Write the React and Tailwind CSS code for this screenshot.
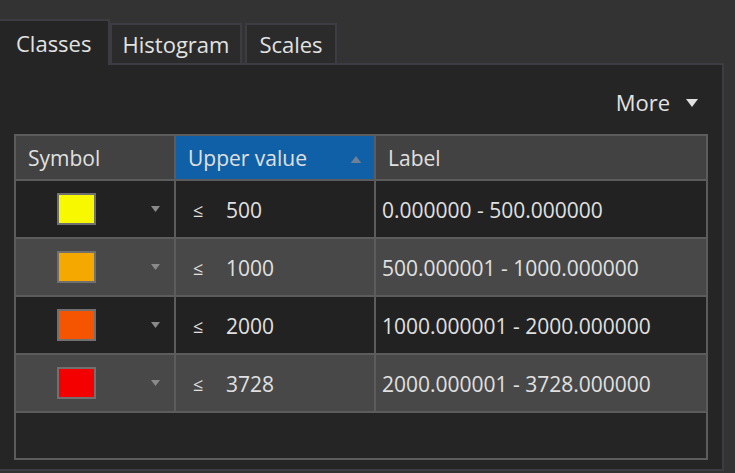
import React from 'react';

const rows = [
  { color: '#f8f800', upper: '500', label: '0.000000 - 500.000000' },
  { color: '#f5a800', upper: '1000', label: '500.000001 - 1000.000000' },
  { color: '#f55500', upper: '2000', label: '1000.000001 - 2000.000000' },
  { color: '#f50000', upper: '3728', label: '2000.000001 - 3728.000000' },
];

// small filled triangle used for dropdowns and sort arrows
const Caret = ({ up = false, className = '' }) => (
  <svg className={className} viewBox="0 0 12 8" xmlns="http://www.w3.org/2000/svg">
    <path d={up ? 'M0 8 L6 0 L12 8 Z' : 'M0 0 L12 0 L6 8 Z'} fill="currentColor" />
  </svg>
);

const Tab = ({ label, active, width }) =>
  active ? (
    <div className="w-[110px] h-[46px] bg-[#252525] border-t-2 border-r-2 border-[#3c3c42] flex items-center pl-[16px] text-[22px] text-[#e2e2e2] -mb-[2px] relative z-10">
      {label}
    </div>
  ) : (
    <div className={`${width} h-[40px] bg-[#2b2b2b] border-2 border-b-0 border-[#3c3c42] flex items-center justify-center text-[22px] text-[#e2e2e2] mr-[3px]`}>
      {label}
    </div>
  );

export default function App() {
  return (
    <div
      className="w-[735px] h-[473px] bg-[#333333] overflow-hidden pt-[19px]"
      style={{ fontFamily: '"Open Sans", "Noto Sans", sans-serif' }}
    >
      <div className="flex items-end">
        <Tab label="Classes" active />
        <Tab label="Histogram" width="w-[132px]" />
        <Tab label="Scales" width="w-[92px]" />
      </div>
      <div className="w-[724px] h-[408px] bg-[#252525] border-t-2 border-r-2 border-b-2 border-[#3c3c42] flex flex-col">
        <div className="h-[69px] flex items-center justify-end pr-[24px] pt-[6px] text-[22px] text-[#e2e2e2]">
          <span>More</span>
          <Caret className="w-[12px] h-[8px] ml-[16px] text-[#e0e0e0]" />
        </div>
        <div className="ml-[14px] w-[694px] h-[326px] border-2 border-[#5c5c5c] bg-[#5c5c5c] flex flex-col gap-[2px] text-[21px] text-[#e0e0e0]">
          <div className="h-[43px] grid grid-cols-[158px_198px_1fr] gap-[2px]">
            <div className="bg-[#424242] flex items-center pl-[12px] pt-[3px]">Symbol</div>
            <div className="bg-[#1060a8] flex items-center pl-[12px] pr-[12px] pt-[3px] justify-between">
              <span>Upper value</span>
              <Caret up className="w-[12px] h-[7px] text-[#6f8094]" />
            </div>
            <div className="bg-[#424242] flex items-center pl-[12px] pt-[3px]">Label</div>
          </div>
          {rows.map((r, i) => {
            const bg = i % 2 === 0 ? 'bg-[#222222]' : 'bg-[#484848]';
            return (
              <div key={r.upper} className="h-[56px] grid grid-cols-[158px_198px_1fr] gap-[2px]">
                <div className={`${bg} flex items-center`}>
                  <div
                    className="ml-[41px] w-[39px] h-[32px] border-2 border-[#707070]"
                    style={{ backgroundColor: r.color }}
                  />
                  <Caret className="ml-[55px] w-[9px] h-[6px] text-[#8a8a8a]" />
                </div>
                <div className={`${bg} flex items-center pl-[17px] pt-[3px]`}>
                  <span className="w-[33px] text-[18px]">≤</span>
                  <span>{r.upper}</span>
                </div>
                <div className={`${bg} flex items-center pl-[6px] pt-[3px]`}>{r.label}</div>
              </div>
            );
          })}
          <div className="flex-1 bg-[#252525]" />
        </div>
      </div>
    </div>
  );
}
